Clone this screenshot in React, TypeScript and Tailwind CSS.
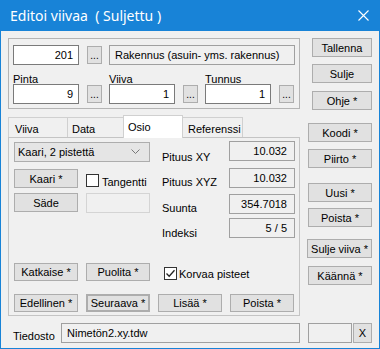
import React from 'react';

const Btn = ({ children, className = '' }: { children?: React.ReactNode; className?: string }) => (
    <div className={`flex items-center justify-center bg-[#e1e1e1] border border-[#adadad] shrink-0 whitespace-nowrap ${className}`}>
        {children}
    </div>
);

const Dots = () => (
    <div className="w-[15px] h-[18px] ml-[8px] shrink-0 bg-[#e1e1e1] border border-[#adadad] flex items-end justify-center pb-[2px] leading-none text-[10px]">
        ...
    </div>
);

const Edit = ({ value, className = '' }: { value: string; className?: string }) => (
    <div className={`h-[20px] bg-white border border-[#7a7a7a] flex items-center justify-end pr-[5px] shrink-0 ${className}`}>
        {value}
    </div>
);

const ReadBox = ({ value }: { value: string }) => (
    <div className="w-[66px] h-[20px] bg-[#f0f0f0] border border-[#a0a0a0] flex items-center justify-end pr-[7px]">
        {value}
    </div>
);

const Check = ({ checked = false }: { checked?: boolean }) => (
    <div className="w-[13px] h-[13px] bg-white border border-[#333333] shrink-0 flex items-center justify-center">
        {checked && (
            <svg width="11" height="11" viewBox="0 0 11 11">
                <path d="M1.5 5.5 L4.2 8.3 L9.5 2.2" fill="none" stroke="#222" strokeWidth="1.3" />
            </svg>
        )}
    </div>
);

export default function App() {
    const fields = [
        { label: 'Pinta', value: '9' },
        { label: 'Viiva', value: '1' },
        { label: 'Tunnus', value: '1' },
    ];

    return (
        <div className="w-[380px] h-[349px] bg-[#1883d7] flex flex-col font-['Liberation_Sans',Arial,sans-serif] text-[11px] leading-[14px] text-black">
            {/* title bar */}
            <div className="h-[31px] shrink-0 flex items-center justify-between pl-[10px] pr-[11px] text-white">
                <span className="font-['Noto_Sans',sans-serif] text-[14px] whitespace-pre">Editoi viivaa  ( Suljettu )</span>
                <svg width="11" height="11" viewBox="0 0 11 11">
                    <path d="M0.5 0.5 L10.5 10.5 M10.5 0.5 L0.5 10.5" stroke="white" strokeWidth="1.1" />
                </svg>
            </div>

            <div className="flex-1 mx-[1px] mb-[1px] bg-[#f0f0f0] flex flex-col">
                <div className="flex pt-[7px] pl-[7px]">
                    {/* left column */}
                    <div className="w-[292px] flex flex-col">
                        {/* group box */}
                        <div className="h-[71px] border border-[#b4b4b4] pt-[6px] pl-[4px] flex flex-col">
                            <div className="flex items-center h-[20px]">
                                <Edit value="201" className="w-[66px]" />
                                <Dots />
                                <div className="ml-[7px] w-[186px] h-[20px] bg-[#f0f0f0] border border-[#a0a0a0] flex items-center pl-[5px] whitespace-nowrap">
                                    Rakennus (asuin- yms. rakennus)
                                </div>
                            </div>
                            <div className="flex gap-[7px] mt-[7px]">
                                {fields.map((f) => (
                                    <div key={f.label} className="flex flex-col">
                                        <div className="h-[12px]">{f.label}</div>
                                        <div className="flex items-center h-[20px]">
                                            <Edit value={f.value} className="w-[66px]" />
                                            <Dots />
                                        </div>
                                    </div>
                                ))}
                            </div>
                        </div>

                        {/* tabs */}
                        <div className="mt-[6px] flex flex-col">
                            <div className="h-[22px] flex items-end">
                                <div className="w-[59px] h-[20px] border-t border-l border-[#d0d0d0] pl-[6px] pt-[4px]">Viiva</div>
                                <div className="w-[56px] h-[20px] border-t border-l border-[#d0d0d0] pl-[4px] pt-[4px]">Data</div>
                                <div className="relative z-10 w-[60px] h-[23px] -mb-[1px] bg-white border-t border-l border-r border-[#d0d0d0] pl-[4px] pt-[4px]">Osio</div>
                                <div className="w-[60px] h-[20px] border-t border-r border-[#d0d0d0] pl-[5px] pt-[4px]">Referenssi</div>
                            </div>
                            <div className="h-[179px] border border-[#c4c4c4] pt-[3px] pl-[5px] flex flex-col">
                                <div className="flex">
                                    {/* left controls */}
                                    <div className="w-[136px] flex flex-col">
                                        <div className="mt-[1px] h-[20px] bg-[#e5e5e5] border border-[#adadad] flex items-center justify-between pl-[3px] pr-[9px]">
                                            <span>Kaari, 2 pistettä</span>
                                            <svg width="9" height="6" viewBox="0 0 9 6">
                                                <path d="M0.5 0.5 L4.5 4.5 L8.5 0.5" fill="none" stroke="#777" strokeWidth="1" />
                                            </svg>
                                        </div>
                                        <div className="mt-[7px] h-[19px] flex items-start">
                                            <Btn className="w-[64px] h-[19px]">Kaari *</Btn>
                                            <div className="ml-[8px] mt-[5px]"><Check /></div>
                                            <span className="ml-[3px] mt-[6px]">Tangentti</span>
                                        </div>
                                        <div className="mt-[5px] flex items-start">
                                            <Btn className="w-[64px] h-[19px]">Säde</Btn>
                                            <div className="ml-[8px] w-[64px] h-[20px] bg-[#f0f0f0] border border-[#d4d4d4]" />
                                        </div>
                                    </div>
                                    {/* labels */}
                                    <div className="ml-[12px] w-[67px] flex flex-col">
                                        <div className="mt-[9px]">Pituus XY</div>
                                        <div className="mt-[11px]">Pituus XYZ</div>
                                        <div className="mt-[12px]">Suunta</div>
                                        <div className="mt-[11px]">Indeksi</div>
                                    </div>
                                    {/* values */}
                                    <div className="flex flex-col">
                                        <ReadBox value="10.032" />
                                        <div className="mt-[7px]"><ReadBox value="10.032" /></div>
                                        <div className="mt-[6px]"><ReadBox value="354.7018" /></div>
                                        <div className="mt-[4px]"><ReadBox value="5 / 5" /></div>
                                    </div>
                                </div>

                                <div className="mt-[23px] h-[18px] flex items-start">
                                    <Btn className="w-[64px] h-[18px]">Katkaise *</Btn>
                                    <Btn className="ml-[8px] w-[64px] h-[18px]">Puolita *</Btn>
                                    <div className="ml-[14px] mt-[4px]"><Check checked /></div>
                                    <span className="ml-[2px] mt-[4px]">Korvaa pisteet</span>
                                </div>

                                <div className="mt-[13px] flex gap-[8px]">
                                    <Btn className="w-[64px] h-[18px]">Edellinen *</Btn>
                                    <Btn className="w-[64px] h-[18px] border-2 border-[#0078d7]">Seuraava *</Btn>
                                    <Btn className="w-[64px] h-[18px]">Lisää *</Btn>
                                    <Btn className="w-[64px] h-[18px]">Poista *</Btn>
                                </div>
                            </div>
                        </div>
                    </div>

                    {/* right column */}
                    <div className="ml-[7px] w-[65px] flex flex-col items-end">
                        <Btn className="w-[60px] h-[19px]">Tallenna</Btn>
                        <Btn className="mt-[7px] w-[60px] h-[19px]">Sulje</Btn>
                        <Btn className="mt-[8px] w-[60px] h-[19px]">Ohje *</Btn>
                        <Btn className="mt-[13px] w-[64px] h-[19px]">Koodi *</Btn>
                        <Btn className="mt-[7px] w-[64px] h-[19px]">Piirto *</Btn>
                        <Btn className="mt-[15px] w-[64px] h-[19px]">Uusi *</Btn>
                        <Btn className="mt-[6px] w-[64px] h-[19px]">Poista *</Btn>
                        <Btn className="mt-[12px] w-[65px] h-[19px]">Sulje viiva *</Btn>
                        <Btn className="mt-[8px] w-[64px] h-[19px]">Käännä *</Btn>
                    </div>
                </div>

                {/* bottom row */}
                <div className="mt-[7px] flex items-start pl-[12px]">
                    <span className="w-[48px] mt-[6px]">Tiedosto</span>
                    <div className="w-[239px] h-[20px] bg-[#f0f0f0] border border-[#a0a0a0] pl-[5px] pt-[2px]">Nimetön2.xy.tdw</div>
                    <div className="ml-[8px] w-[44px] h-[20px] bg-[#f0f0f0] border border-[#a0a0a0]" />
                    <Btn className="ml-[1px] w-[19px] h-[20px]">X</Btn>
                </div>
            </div>
        </div>
    );
}
